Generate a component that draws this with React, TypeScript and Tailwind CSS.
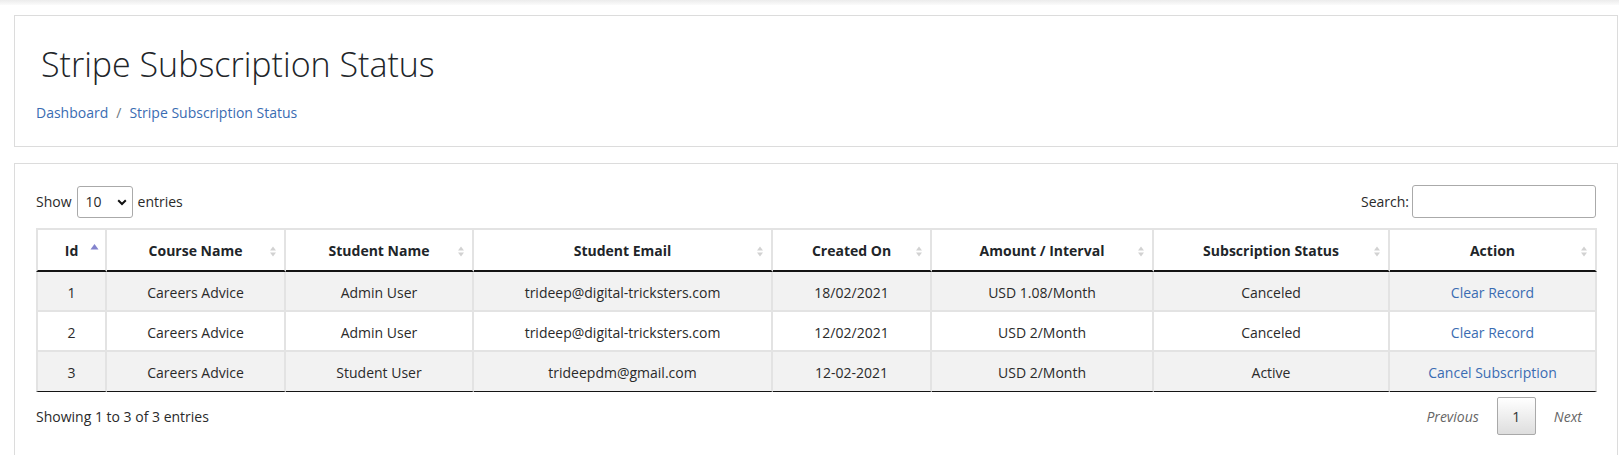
import React from "react";

type Row = {
  id: string;
  course: string;
  student: string;
  email: string;
  created: string;
  amount: string;
  status: string;
  action: string;
};

const rows: Row[] = [
  { id: "1", course: "Careers Advice", student: "Admin User", email: "trideep@digital-tricksters.com", created: "18/02/2021", amount: "USD 1.08/Month", status: "Canceled", action: "Clear Record" },
  { id: "2", course: "Careers Advice", student: "Admin User", email: "trideep@digital-tricksters.com", created: "12/02/2021", amount: "USD 2/Month", status: "Canceled", action: "Clear Record" },
  { id: "3", course: "Careers Advice", student: "Student User", email: "trideepdm@gmail.com", created: "12-02-2021", amount: "USD 2/Month", status: "Active", action: "Cancel Subscription" },
];

const cols: { label: string; w: string; asc?: boolean }[] = [
  { label: "Id", w: "w-[71px]", asc: true },
  { label: "Course Name", w: "w-[179px]" },
  { label: "Student Name", w: "w-[188px]" },
  { label: "Student Email", w: "w-[299px]" },
  { label: "Created On", w: "w-[159px]" },
  { label: "Amount / Interval", w: "w-[222px]" },
  { label: "Subscription Status", w: "w-[236px]" },
  { label: "Action", w: "w-[207px]" },
];

function SortIcon({ asc }: { asc?: boolean }) {
  if (asc) {
    return (
      <svg width="9" height="12" viewBox="0 0 9 12" className="absolute right-[6px] top-[13px]">
        <path d="M0.5 6.5 L4.5 1 L8.5 6.5 Z" fill="#8383cd" />
      </svg>
    );
  }
  return (
    <svg width="8" height="13" viewBox="0 0 8 13" className="absolute right-[7px] top-[15px]">
      <path d="M1 5.5 L4 1.5 L7 5.5 Z" fill="#d2d2d2" />
      <path d="M1 7.5 L4 11.5 L7 7.5 Z" fill="#d2d2d2" />
    </svg>
  );
}

export default function App() {
  return (
    <div className="min-h-screen bg-white font-['Open_Sans','Noto_Sans',sans-serif] text-[14px] text-[#2a2a2a]">
      <div className="h-[5px] bg-gradient-to-b from-[#ececec] to-[#fbfbfb]" />
      <div className="ml-[14px] mr-[1px] mt-[10px] flex flex-col gap-[16px]">
        {/* Header card */}
        <div className="border border-[#dcdcdc] bg-white px-[21px] pt-[28px] pb-[23px]">
          <h1 className="ml-[5px] text-[34px] font-light leading-[40px] text-[#212529]">
            Stripe Subscription Status
          </h1>
          <nav className="mt-[19px] flex items-center leading-[20px] text-[#3a6cb2]">
            <a href="#" className="text-[#3a6cb2]">Dashboard</a>
            <span className="px-[8px] text-[#6c757d]">/</span>
            <span>Stripe Subscription Status</span>
          </nav>
        </div>

        {/* Table card */}
        <div className="border border-b-0 border-[#dcdcdc] bg-white px-[21px] pt-[21px] pb-[20px]">
          <div className="flex h-[33px] items-center justify-between">
            <div className="flex items-center gap-[5px]">
              <span>Show</span>
              <div className="relative">
                <select
                  defaultValue="10"
                  className="h-[32px] w-[56px] appearance-none rounded-[3px] border border-[#aaaaaa] bg-white pl-[8px] text-[14px] text-[#2a2a2a] outline-none"
                >
                  <option value="10">10</option>
                  <option value="25">25</option>
                  <option value="50">50</option>
                  <option value="100">100</option>
                </select>
                <svg
                  width="10"
                  height="7"
                  viewBox="0 0 10 7"
                  className="pointer-events-none absolute right-[6px] top-[13px]"
                >
                  <path d="M1.2 1.2 L5 5 L8.8 1.2" stroke="#111" strokeWidth="2" fill="none" />
                </svg>
              </div>
              <span>entries</span>
            </div>
            <div className="flex items-center gap-[3px]">
              <span>Search:</span>
              <input
                type="search"
                className="h-[33px] w-[184px] rounded-[3px] border border-[#aaaaaa] bg-white px-[6px] outline-none"
              />
            </div>
          </div>

          <table className="mt-[10px] w-[1561px] table-fixed border-separate border-spacing-0">
            <thead>
              <tr>
                {cols.map((c, i) => (
                  <th
                    key={c.label}
                    className={
                      "relative h-[44px] border-t-2 border-r-2 border-b-2 border-t-[#e3e3e3] border-r-[#e3e3e3] border-b-[#141414] bg-white p-0 text-center text-[14px] font-bold text-[#212529] " +
                      c.w +
                      (i === 0 ? " border-l-2 border-l-[#e3e3e3]" : "")
                    }
                  >
                    {c.label}
                    <SortIcon asc={c.asc} />
                  </th>
                ))}
              </tr>
            </thead>
            <tbody>
              {rows.map((r, ri) => {
                const last = ri === rows.length - 1;
                const bg = ri % 2 === 0 ? "bg-[#f2f2f2]" : "bg-white";
                const cells = [r.id, r.course, r.student, r.email, r.created, r.amount, r.status];
                const base =
                  "h-[40px] p-0 pt-[2px] text-center border-r-2 border-r-[#e3e3e3] " +
                  (last ? "border-b border-b-[#141414] " : "border-b-2 border-b-[#e3e3e3] ") +
                  bg;
                return (
                  <tr key={r.id}>
                    {cells.map((v, ci) => (
                      <td key={ci} className={base + (ci === 0 ? " border-l-2 border-l-[#e3e3e3]" : "")}>
                        {v}
                      </td>
                    ))}
                    <td className={base}>
                      <a href="#" className="text-[#3a6cb2]">{r.action}</a>
                    </td>
                  </tr>
                );
              })}
            </tbody>
          </table>

          <div className="mt-[5px] flex h-[38px] items-center justify-between">
            <div>Showing 1 to 3 of 3 entries</div>
            <div className="flex items-center gap-[4px] italic text-[#666666]">
              <span className="px-[14px]">Previous</span>
              <span className="flex h-[38px] w-[39px] items-center justify-center rounded-[2px] border border-[#a9a9a9] bg-gradient-to-b from-white to-[#dedede] not-italic text-[#333333]">
                1
              </span>
              <span className="px-[14px]">Next</span>
            </div>
          </div>
        </div>
      </div>
    </div>
  );
}
